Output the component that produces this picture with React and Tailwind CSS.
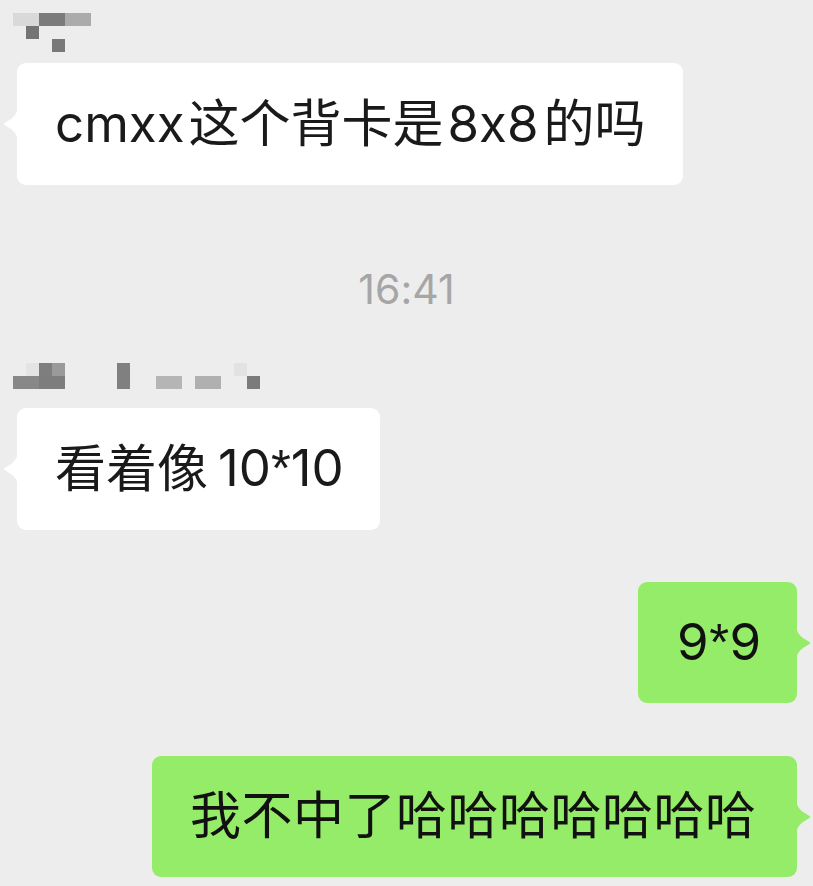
import React from "react";

const font = {
  fontFamily: 'Inter, "Noto Sans CJK SC", sans-serif',
  fontFeatureSettings: '"calt" 0',
};

// pixelated (mosaic) nickname blocks
const nameOne = [
  [13, 13, 26, 13, "#d9d9d9"],
  [39, 13, 26, 13, "#7b7b7b"],
  [65, 13, 26, 13, "#ababab"],
  [26, 26, 13, 13, "#747474"],
  [52, 39, 13, 13, "#797979"],
];

const nameTwo = [
  [26, 0, 13, 13, "#e4e4e4"],
  [39, 0, 13, 13, "#7e7e7e"],
  [52, 0, 13, 13, "#9a9a9a"],
  [13, 13, 26, 13, "#888888"],
  [39, 13, 26, 13, "#7d7d7d"],
  [117, 0, 13, 26, "#808080"],
  [156, 13, 26, 13, "#b5b5b5"],
  [195, 13, 26, 13, "#b0b0b0"],
  [234, 0, 13, 13, "#e2e2e2"],
  [247, 13, 13, 13, "#7b7b7b"],
];

const Mosaic = ({ blocks, width, height }) => (
  <svg width={width} height={height} className="block">
    {blocks.map(([x, y, w, h, c], i) => (
      <rect key={i} x={x} y={y} width={w} height={h} fill={c} />
    ))}
  </svg>
);

const TailLeft = ({ color }) => (
  <svg width="16" height="38" viewBox="0 0 16 38" className="absolute left-[-15px] top-1/2 -translate-y-1/2">
    <path d="M16 0 C16 7 13 11 9 14 L2.5 18 Q1 19 2.5 20 L9 24 C13 27 16 31 16 38 Z" fill={color} />
  </svg>
);

const TailRight = ({ color }) => (
  <svg width="16" height="38" viewBox="0 0 16 38" className="absolute right-[-15px] top-1/2 -translate-y-1/2">
    <path d="M0 0 C0 7 3 11 7 14 L13.5 18 Q15 19 13.5 20 L7 24 C3 27 0 31 0 38 Z" fill={color} />
  </svg>
);

// asterisk sits high, like the phone's system font
const Star = () => <span style={{ fontFamily: '"Liberation Sans", sans-serif' }}>*</span>;

const LeftBubble = ({ width, children, className }) => (
  <div className={`relative ml-[17px] ${className}`} style={{ width }}>
    <div className="bg-white rounded-[9px] h-[122px] pl-[38px] flex items-center text-[51px] text-[#1a1a1a] whitespace-nowrap">
      {children}
    </div>
    <TailLeft color="#ffffff" />
  </div>
);

const RightBubble = ({ width, children, className }) => (
  <div className={`relative self-end mr-[16px] ${className}`} style={{ width }}>
    <div className="bg-[#95ec69] rounded-[9px] h-[121px] pl-[38px] flex items-center text-[51px] text-[#111111] whitespace-nowrap tracking-[0.5px]">
      {children}
    </div>
    <TailRight color="#95ec69" />
  </div>
);

export default function App() {
  return (
    <div className="w-[813px] h-[886px] bg-[#ededed] overflow-hidden flex flex-col" style={font}>
      <Mosaic blocks={nameOne} width={100} height={52} />

      <LeftBubble width={666} className="mt-[11px]">
        <span>cmxx</span>
        <span className="ml-[4px]">这个背卡是</span>
        <span className="ml-[4px]">8x8</span>
        <span className="ml-[5px]">的吗</span>
      </LeftBubble>

      <div className="mt-[82px] h-[44px] leading-[44px] text-center text-[41px] text-[#a6a6a6]">
        16:41
      </div>

      <div className="mt-[52px]">
        <Mosaic blocks={nameTwo} width={270} height={26} />
      </div>

      <LeftBubble width={363} className="mt-[19px]">
        <span>看着像</span>
        <span className="ml-[10px]">10<Star />10</span>
      </LeftBubble>

      <RightBubble width={159} className="mt-[52px]">
        <span className="ml-[1px]">9<Star />9</span>
      </RightBubble>

      <RightBubble width={645} className="mt-[53px]">
        我不中了哈哈哈哈哈哈哈
      </RightBubble>
    </div>
  );
}
